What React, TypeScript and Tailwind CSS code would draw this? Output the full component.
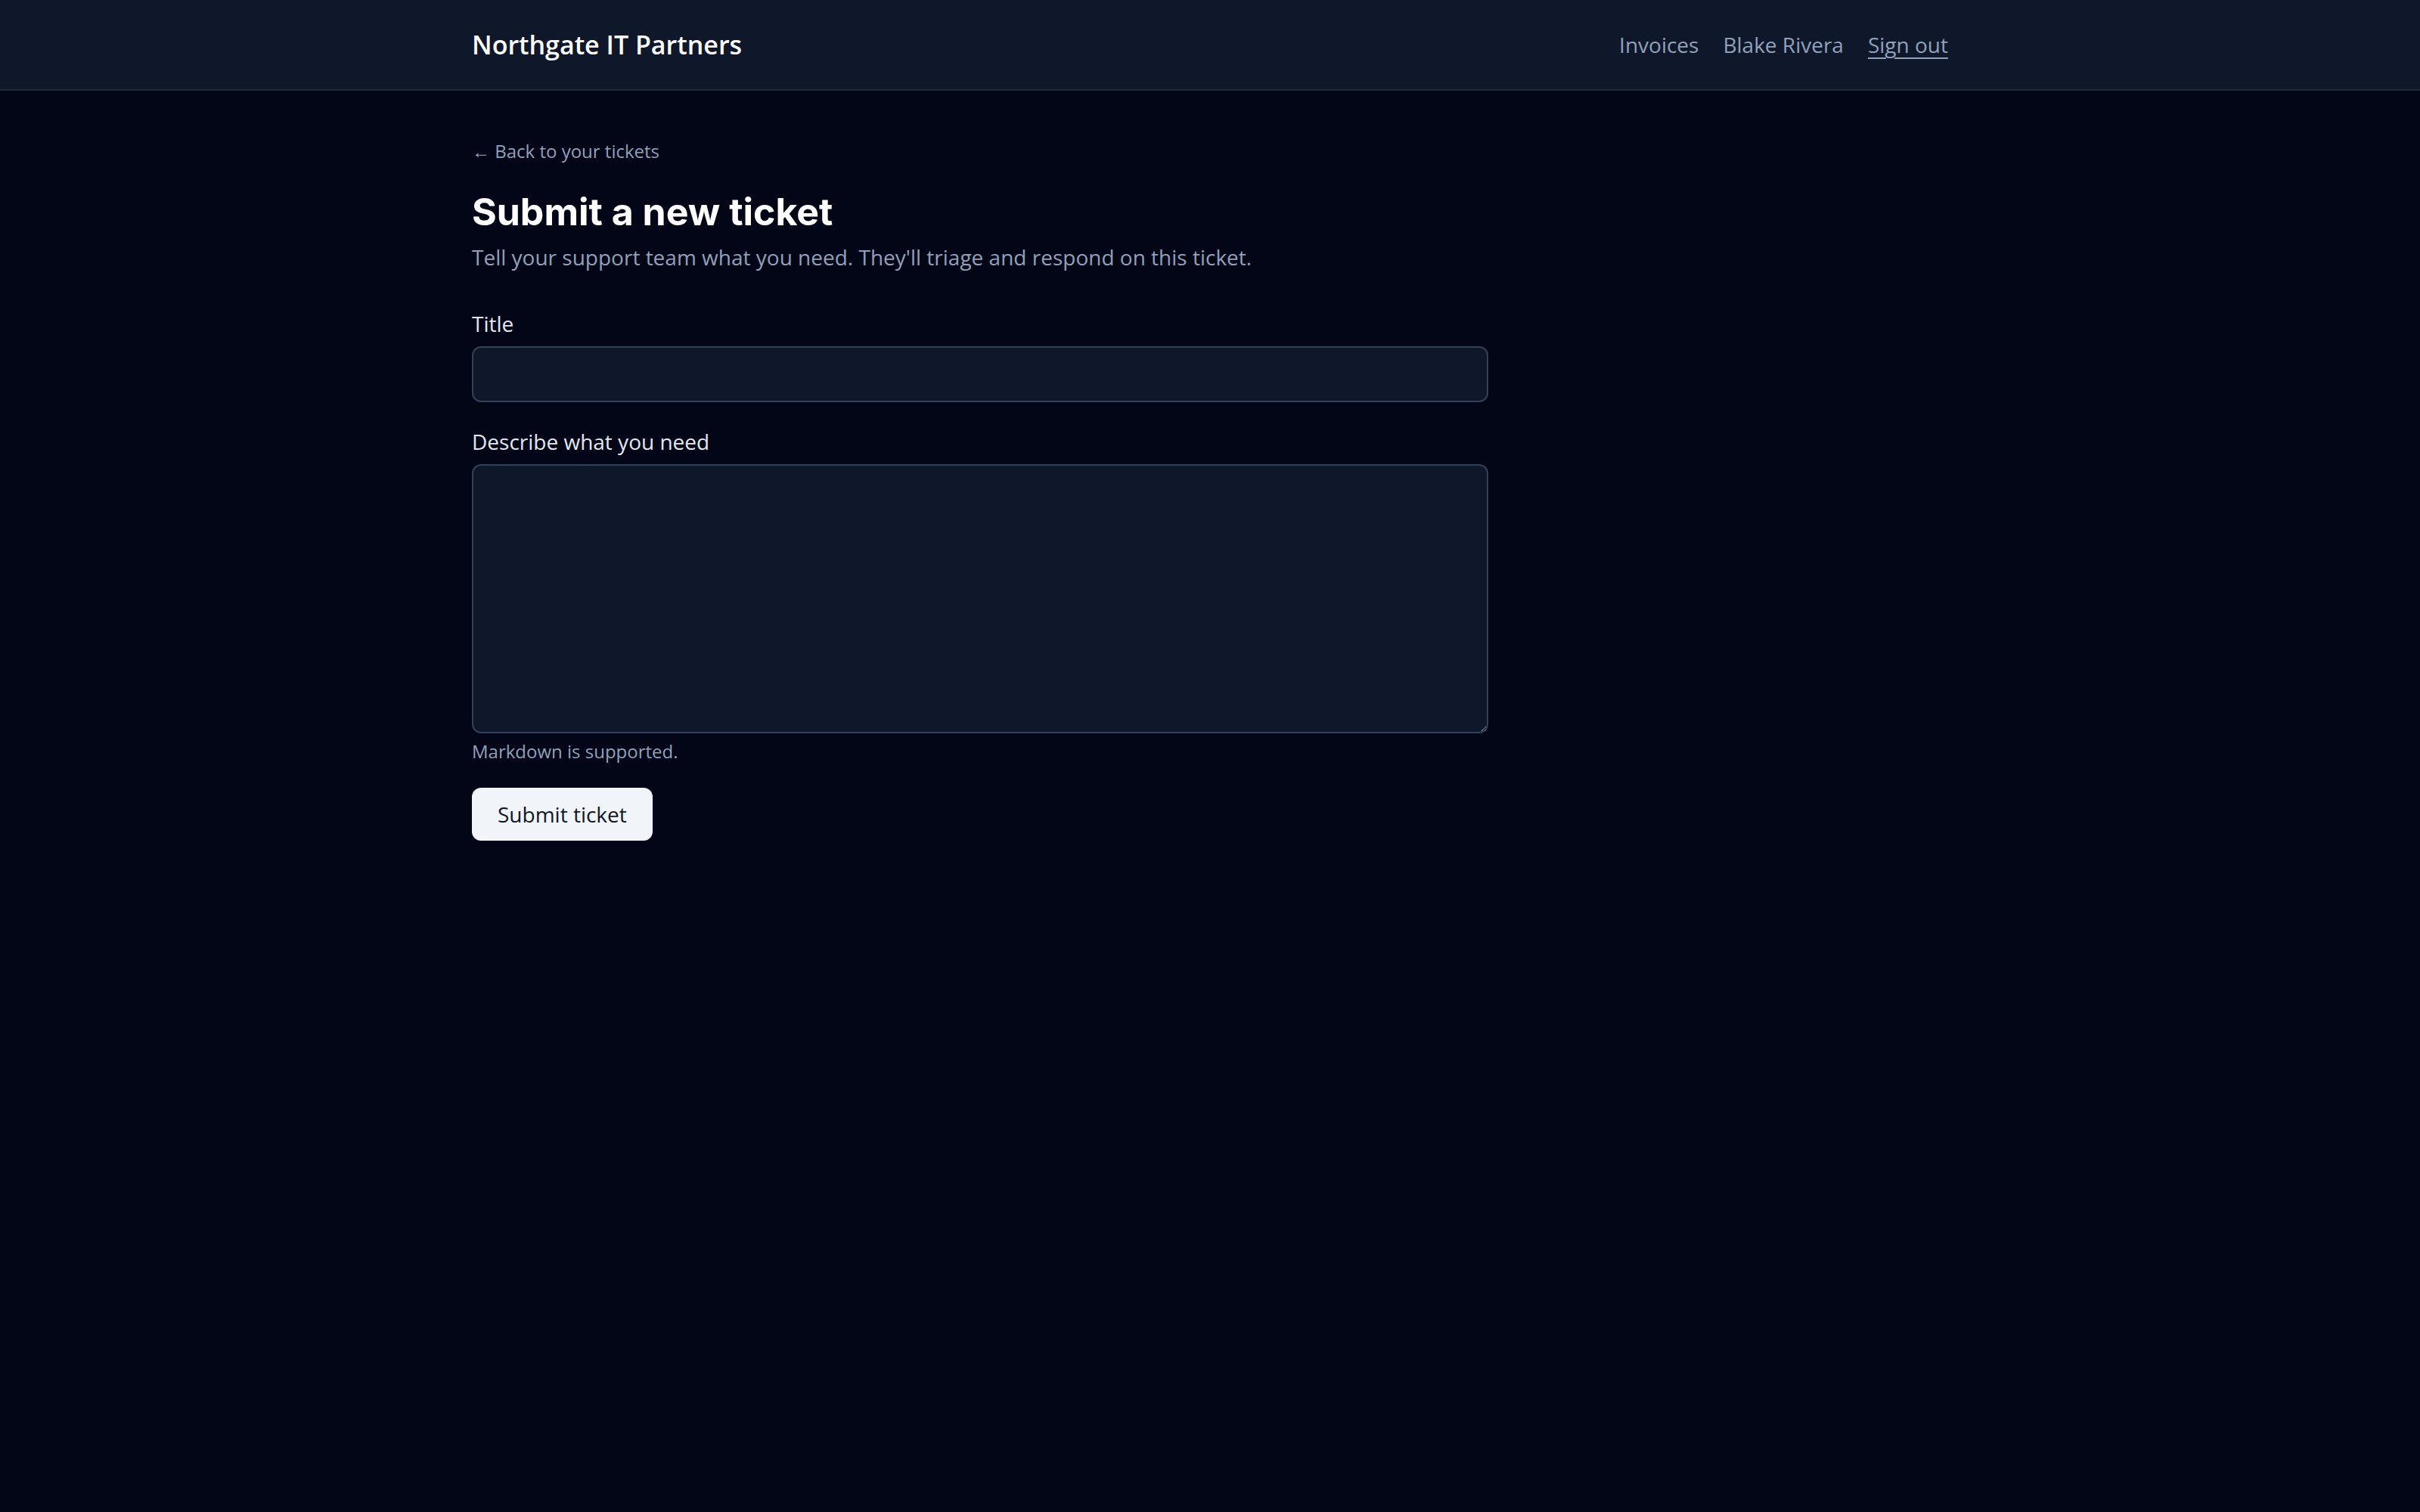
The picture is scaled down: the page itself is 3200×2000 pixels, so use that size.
export default function App() {
    return (
        <div className="min-h-screen bg-[#020617] font-['Open_Sans',sans-serif] text-slate-200">
            <header className="border-b-2 border-slate-800 bg-slate-900">
                <div className="mx-auto flex h-[118px] max-w-[2048px] items-center justify-between px-12">
                    <span className="text-[34px] leading-[48px] font-semibold text-white">Northgate IT Partners</span>
                    <nav className="flex items-center gap-8 text-[28px] leading-[40px] text-slate-400">
                        <a href="#">Invoices</a>
                        <span>Blake Rivera</span>
                        <button type="button" className="underline decoration-2 underline-offset-[6px]">
                            Sign out
                        </button>
                    </nav>
                </div>
            </header>

            <main className="mx-auto max-w-[2048px] px-12 py-16">
                <a href="#" className="block text-[24px] leading-[32px] text-slate-400">
                    ← Back to your tickets
                </a>
                <h1 className="mt-8 font-['Inter',sans-serif] text-[50px] leading-[64px] font-bold text-white">
                    Submit a new ticket
                </h1>
                <p className="mt-2 text-[28px] leading-[40px] text-slate-400">
                    Tell your support team what you need. They'll triage and respond on this ticket.
                </p>

                <form className="mt-12 max-w-[1344px]" onSubmit={(e) => e.preventDefault()}>
                    <div className="space-y-8">
                        <div>
                            <label className="block text-[28px] leading-[40px] font-medium text-slate-200">Title</label>
                            <input
                                type="text"
                                className="mt-2.5 block w-full rounded-xl border-2 border-slate-700 bg-slate-900 px-6 py-[15px] text-[28px] leading-[40px] text-slate-100 outline-none"
                            />
                        </div>
                        <div>
                            <label className="block text-[28px] leading-[40px] font-medium text-slate-200">
                                Describe what you need
                            </label>
                            <textarea
                                rows={8}
                                className="mt-2.5 block w-full rounded-xl border-2 border-slate-700 bg-slate-900 px-6 py-4 text-[28px] leading-[40px] text-slate-100 outline-none"
                            />
                            <p className="mt-2 text-[24px] leading-[32px] text-slate-400">Markdown is supported.</p>
                        </div>
                    </div>
                    <button
                        type="submit"
                        className="mt-8 rounded-xl bg-slate-100 px-[34px] py-[15px] text-[28px] leading-[40px] text-slate-900"
                    >
                        Submit ticket
                    </button>
                </form>
            </main>
        </div>
    )
}
